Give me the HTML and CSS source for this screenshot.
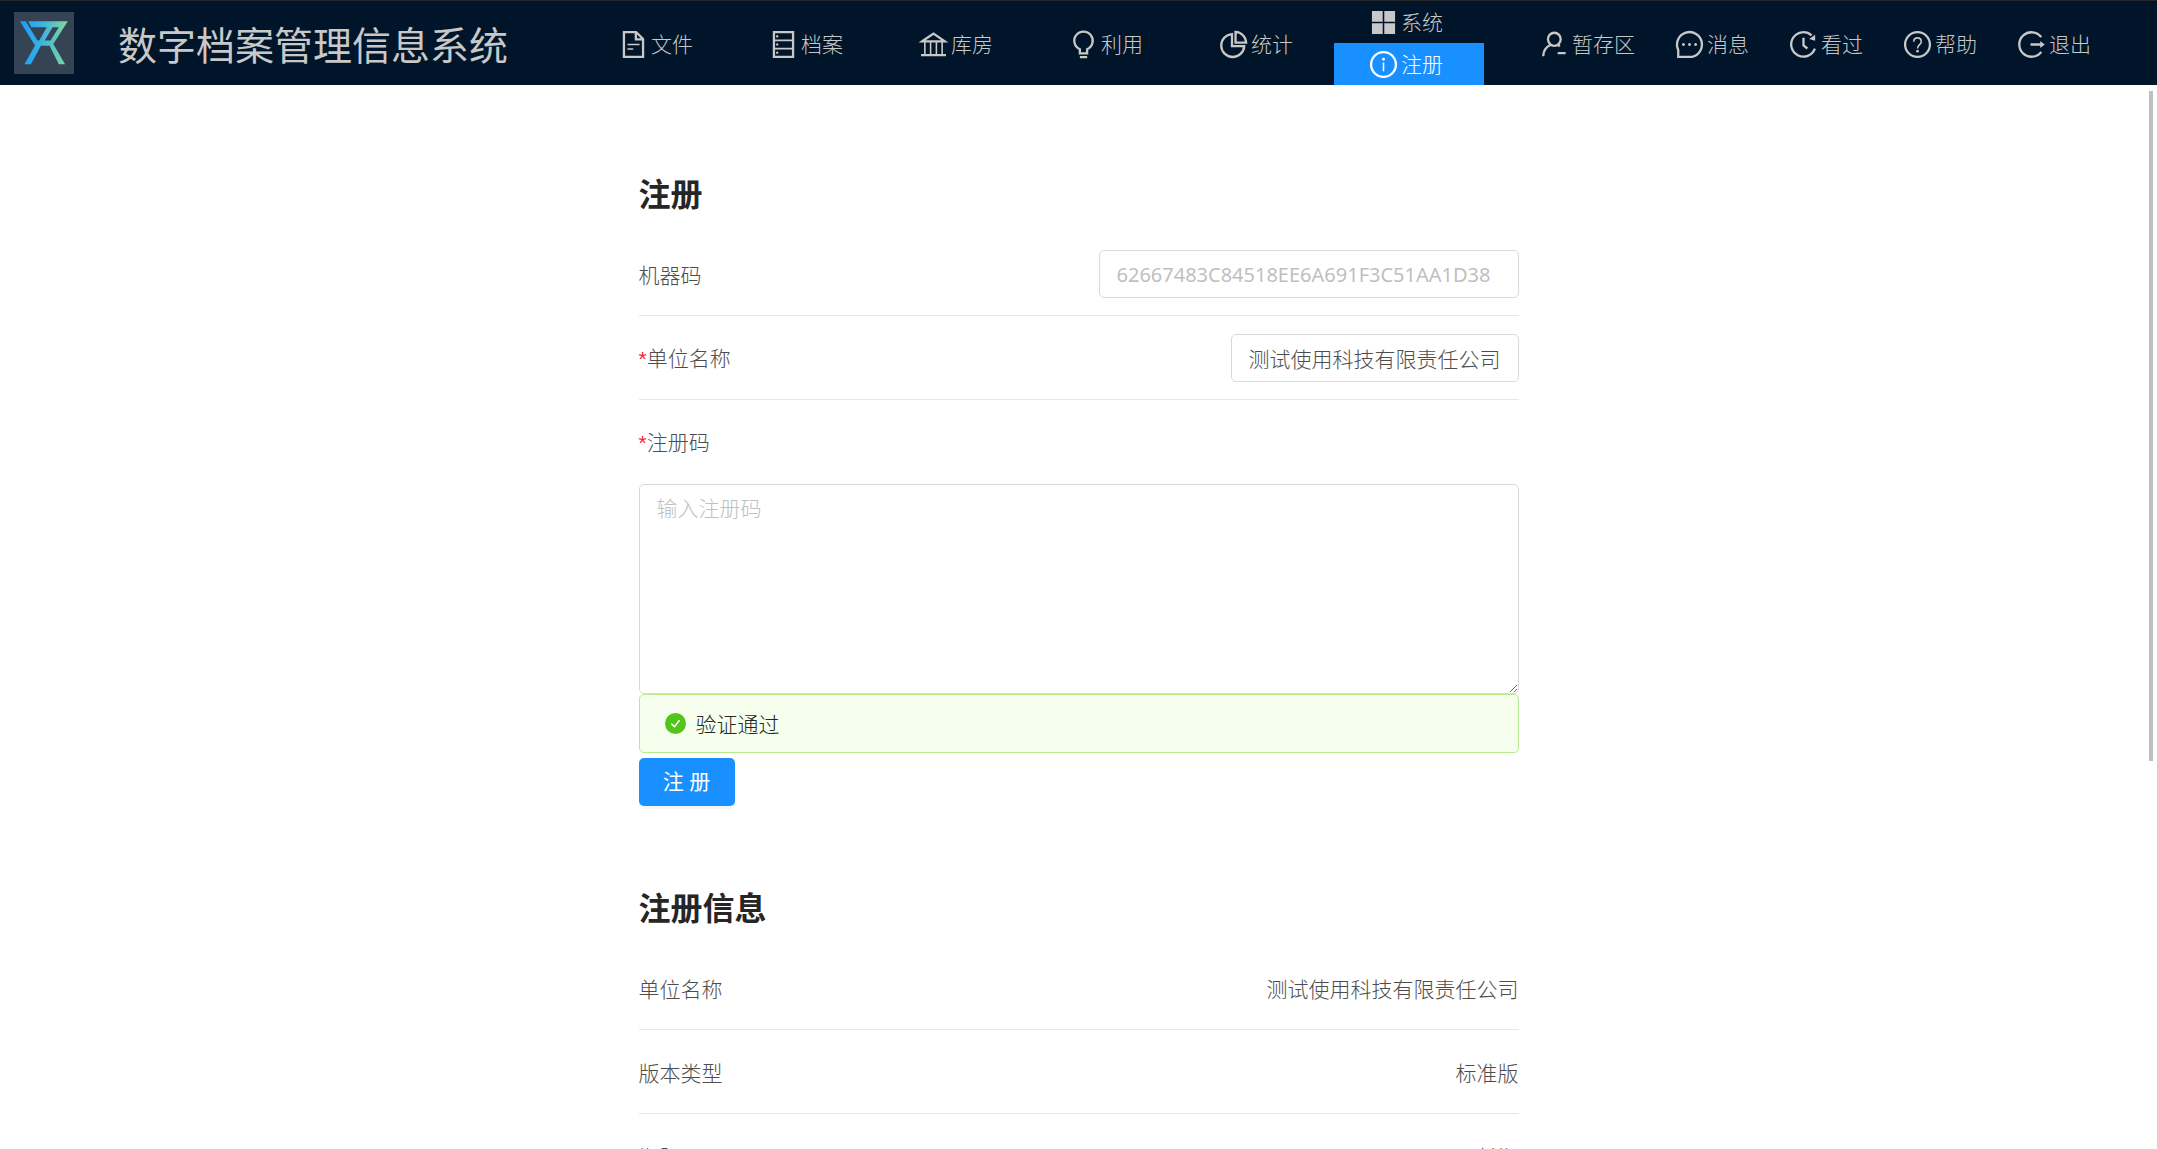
FILE: index.html
```html
<!DOCTYPE html>
<html lang="zh-CN">
<head>
<meta charset="utf-8">
<meta name="viewport" content="width=device-width, initial-scale=1">
<title>数字档案管理信息系统</title>
<link rel="stylesheet" href="styles.css">
</head>
<body>
<header class="topbar">
  <div class="brand">
    <svg class="logo" viewBox="41 39 174 180" preserveAspectRatio="none" aria-hidden="true">
      <defs>
        <linearGradient id="logo-tone" gradientUnits="userSpaceOnUse" x1="60" y1="0" x2="196" y2="0">
          <stop offset="0" stop-color="#1a9cf8"/>
          <stop offset="0.45" stop-color="#3cb2e0"/>
          <stop offset="1" stop-color="#84d89a"/>
        </linearGradient>
      </defs>
      <rect x="41" y="39" width="174" height="180" fill="#344454"/>
      <path fill="url(#logo-tone)" fill-rule="evenodd" d="M58 66H75L109 122H114L136 83H91L82 66H197L155 132L189 191H171L144 137H119L90 191H71L102 136ZM153 83L130 122H147L171 83Z"/>
    </svg>
    <span class="brand-name">数字档案管理信息系统</span>
  </div>
  <nav class="menu">
    <a class="menu-item" href="#"><svg class="icon" viewBox="0 0 1024 1024"><path d="M196 100H600L828 328V924H196ZM590 100V340H828"/><path class="thin" d="M312 512H712M312 660H504"/></svg>文件</a>
    <a class="menu-item" href="#"><svg class="icon" viewBox="0 0 1024 1024"><path d="M196 100H828V924H196Z"/><path class="thin" d="M196 376H828M196 648H828"/><path class="solid" d="M304 200a40 40 0 1 0 1 0ZM304 472a40 40 0 1 0 1 0ZM304 744a40 40 0 1 0 1 0Z"/></svg>档案</a>
    <a class="menu-item" href="#"><svg class="icon" viewBox="0 0 1024 1024"><path d="M140 406L512 150L884 406ZM100 866H924"/><path class="thin" d="M226 424V866M416 424V866M608 424V866M798 424V866"/></svg>库房</a>
    <a class="menu-item" href="#"><svg class="icon" viewBox="0 0 1024 1024"><path d="M392 804V668A304 304 0 1 1 632 668V804ZM392 926H632"/></svg>利用</a>
    <a class="menu-item" href="#"><svg class="icon" viewBox="0 0 1024 1024"><path d="M462 166A380 380 0 1 0 866 566H462ZM580 98A370 370 0 0 1 930 452H580Z"/></svg>统计</a>
    <div class="menu-group">
      <a class="menu-item" href="#"><svg class="icon" viewBox="0 0 1024 1024"><path class="solid" d="M130 130H486V486H130ZM538 130H894V486H538ZM130 538H486V894H130ZM538 538H894V894H538Z"/></svg>系统</a>
      <a class="menu-item active" href="#" aria-current="page"><svg class="icon" viewBox="0 0 1024 1024"><circle cx="512" cy="512" r="410"/><path class="thin" d="M512 448V736"/><circle class="solid" cx="512" cy="336" r="48"/></svg>注册</a>
    </div>
  </nav>
  <nav class="tools">
    <a class="tool" href="#"><svg class="icon" viewBox="0 0 1024 1024"><ellipse cx="506" cy="340" rx="210" ry="216"/><path d="M390 520C240 590 140 730 140 904M622 520L690 570M616 800H880"/></svg>暂存区</a>
    <a class="tool" href="#"><svg class="icon" viewBox="0 0 1024 1024"><path d="M140 924V690A412 412 0 1 1 512 924Z"/><path class="solid" d="M312 464a48 48 0 1 0 1 0ZM512 464a48 48 0 1 0 1 0ZM712 464a48 48 0 1 0 1 0Z"/></svg>消息</a>
    <a class="tool" href="#"><svg class="icon" viewBox="0 0 1024 1024"><path d="M780 210A404 404 0 1 0 888 650M512 290V540L640 644"/><path class="solid" d="M896 190V384L700 330Z"/></svg>看过</a>
    <a class="tool" href="#"><svg class="icon" viewBox="0 0 1024 1024"><circle cx="512" cy="512" r="410"/><path class="thin" d="M388 420C388 250 636 250 636 420C636 520 512 520 512 648"/><circle class="solid" cx="512" cy="732" r="44"/></svg>帮助</a>
    <a class="tool" href="#"><svg class="icon" viewBox="0 0 1024 1024"><path d="M836 270A404 404 0 1 0 836 754M480 512H840"/><path class="solid" d="M800 400L950 512L800 624Z"/></svg>退出</a>
  </nav>
</header>

<main class="page">
  <div class="content">
    <form class="section">
      <h1 class="title">注册</h1>
      <div class="row">
        <label class="cell" for="machine">机器码</label>
        <input class="field wide" id="machine" type="text" placeholder="62667483C84518EE6A691F3C51AA1D38" readonly>
      </div>
      <div class="row">
        <label class="cell" for="company"><span class="required">*</span>单位名称</label>
        <input class="field" id="company" type="text" value="测试使用科技有限责任公司">
      </div>
      <div class="row last">
        <label class="cell" for="code"><span class="required">*</span>注册码</label>
      </div>
      <textarea class="code" id="code" placeholder="输入注册码"></textarea>
      <div class="alert" role="status">
        <svg class="check" viewBox="0 0 20 20" aria-hidden="true"><circle cx="10" cy="10" r="10" fill="#52c41a"/><path d="M6 10.2L9 13L13.8 7" fill="none" stroke="#fff" stroke-width="1.5"/></svg>
        <span>验证通过</span>
      </div>
      <button class="submit" type="button">注 册</button>
    </form>
    <section class="section">
      <h2 class="title">注册信息</h2>
      <div class="row"><span class="cell">单位名称</span><span class="cell">测试使用科技有限责任公司</span></div>
      <div class="row"><span class="cell">版本类型</span><span class="cell">标准版</span></div>
      <div class="row"><span class="cell">期限</span><span class="cell">长期</span></div>
    </section>
  </div>
  <div class="scroll-thumb"></div>
</main>
</body>
</html>
```
FILE: styles.css
```css
* {
  box-sizing: border-box;
}

body {
  display: flex;
  flex-direction: column;
  height: 100vh;
  margin: 0;
  overflow: hidden;
  background: #fff;
  color: #4d4d4d;
  font-family: "Noto Sans", "Noto Sans CJK SC", sans-serif;
  font-size: 21px;
  font-weight: 300;
  line-height: 32px;
}

/* top bar */
.topbar {
  display: flex;
  flex: none;
  height: 85px;
  padding-right: 66px;
  border-top: 1px solid #262626;
  background: #001529;
  color: #c8c8c8;
  white-space: nowrap;
}

.brand {
  display: flex;
  flex: none;
  align-items: center;
  gap: 44px;
  width: 584px;
  padding: 0 0 0 14px;
}

.logo {
  width: 60px;
  height: 62px;
}

.brand-name {
  padding-top: 4px;
  font-size: 39px;
  font-weight: 400;
  line-height: 56px;
}

.menu {
  display: flex;
}

.menu-item,
.tool {
  display: flex;
  align-items: center;
  gap: 2px;
  color: inherit;
  text-decoration: none;
}

.menu > .menu-item,
.tool {
  padding-top: 2px;
}

.menu-item {
  width: 150px;
  padding-left: 34px;
}

.menu-group {
  display: grid;
  grid-template-rows: 1fr 1fr;
}

.active {
  background: #1890ff;
  color: #fff;
}

.tools {
  display: flex;
  gap: 39px;
  margin-left: auto;
}

.icon {
  flex: none;
  width: 31px;
  height: 31px;
  fill: none;
  stroke: currentColor;
  stroke-width: 76;
}

.thin {
  stroke-width: 52;
}

.solid {
  fill: currentColor;
  stroke: none;
}

/* page body */
.page {
  position: relative;
  flex: 1;
  min-height: 0;
  overflow: hidden;
}

.content {
  max-width: 880px;
  margin: 0 auto;
  padding-top: 85px;
}

.section {
  margin-bottom: 78px;
}

.title {
  margin: 0 0 14px;
  color: #262626;
  font-size: 32px;
  font-weight: 700;
  line-height: 48px;
}

.row {
  display: flex;
  align-items: center;
  justify-content: space-between;
  height: 84px;
  border-bottom: 1px solid #e8e8e8;
}

.last {
  border-bottom-color: transparent;
}

.cell {
  padding-top: 2px;
}

.required {
  color: #f5222d;
  font-family: "Liberation Sans", sans-serif;
}

.field,
.code {
  border: 1px solid #d9d9d9;
  border-radius: 5px;
  background: #fff;
  color: inherit;
  font: inherit;
}

.field {
  width: 288px;
  height: 48px;
  padding: 0 17px;
}

.wide {
  width: 420px;
  padding-top: 2px;
  font-size: 20px;
  font-weight: 400;
}

.field::placeholder,
.code::placeholder {
  color: #bfbfbf;
}

.code {
  display: block;
  width: 100%;
  height: 210px;
  padding: 7px 17px;
}

.alert {
  display: flex;
  align-items: center;
  gap: 10px;
  height: 59px;
  padding-left: 25px;
  border: 1px solid #b7eb8f;
  border-radius: 5px;
  background: #f6ffed;
  color: #262626;
}

.check {
  width: 21px;
  height: 21px;
}

.submit {
  display: block;
  width: 96px;
  height: 48px;
  margin-top: 5px;
  padding: 0 0 2px;
  border: 0;
  border-radius: 5px;
  background: #1890ff;
  box-shadow: 0 3px 0 rgba(0, 0, 0, 0.04);
  color: #fff;
  font: inherit;
  font-weight: 400;
}

.scroll-thumb {
  position: absolute;
  top: 6px;
  right: 4px;
  width: 4px;
  height: 63%;
  background: #bfbfbf;
}
```
